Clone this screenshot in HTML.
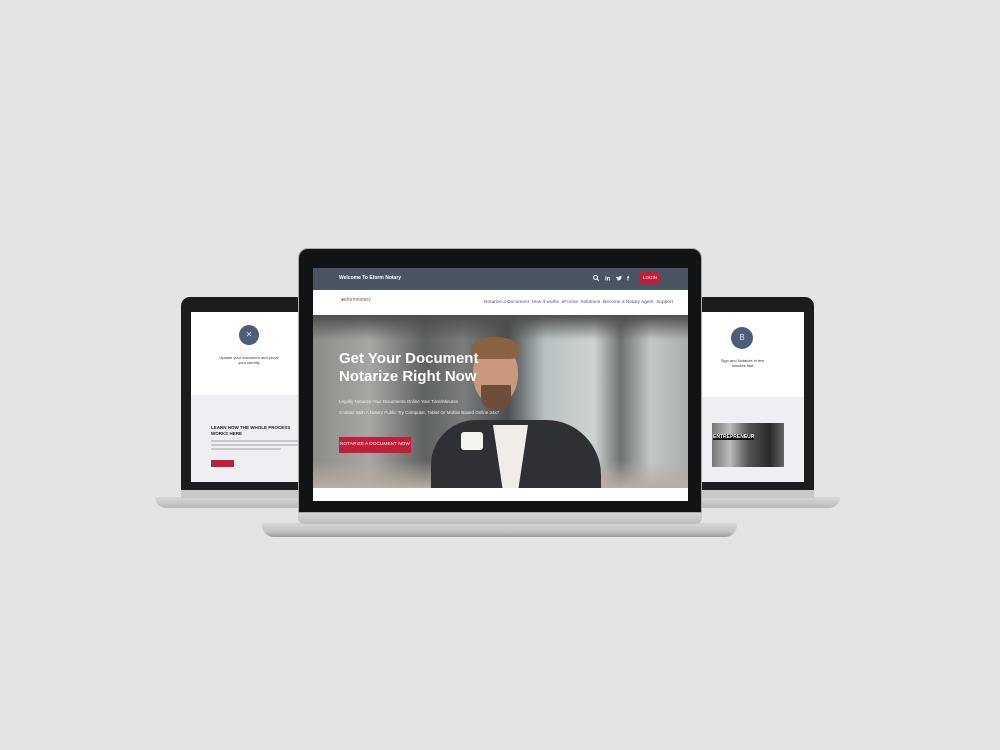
<!DOCTYPE html>
<html><head><style>
*{margin:0;padding:0;box-sizing:border-box}
body{width:1000px;height:750px;background:#e5e4e5;position:relative;overflow:hidden;font-family:"Liberation Sans",sans-serif}
.a{position:absolute}
</style></head><body>
<!-- left laptop -->
<div class="a" style="left:155px;top:497px;width:150px;height:11px;background:linear-gradient(#d8d8d8,#b9b9b9);border-radius:0 0 6px 20px"></div>
<div class="a" style="left:181px;top:297px;width:125px;height:200px;background:#1b1c1d;border-radius:9px 0 0 0"></div>
<div class="a" style="left:181px;top:490px;width:125px;height:8px;background:#c9c9c9"></div>
<div class="a" style="left:191px;top:312px;width:110px;height:83px;background:#fff"></div>
<div class="a" style="left:191px;top:395px;width:110px;height:87px;background:#eeeff3"></div>
<div class="a" style="left:239px;top:325px;width:20px;height:20px;border-radius:50%;background:#4d5e7a;color:#dfe4ec;font-size:8px;text-align:center;line-height:20px">✕</div>
<div class="a" style="left:218px;top:355px;width:62px;font-size:4px;text-align:center;color:#333;line-height:5px">Update your document and prove your identity</div>
<div class="a" style="left:211px;top:425px;width:90px;font-size:4.5px;font-weight:bold;color:#222;line-height:6px">LEARN HOW THE WHOLE PROCESS WORKS HERE</div>
<div class="a" style="left:211px;top:440px;width:90px;height:2px;background:#c6c7cc"></div>
<div class="a" style="left:211px;top:444px;width:90px;height:2px;background:#c6c7cc"></div>
<div class="a" style="left:211px;top:448px;width:70px;height:2px;background:#c6c7cc"></div>
<div class="a" style="left:211px;top:460px;width:23px;height:7px;background:#c21d3a"></div>
<!-- right laptop -->
<div class="a" style="left:695px;top:497px;width:145px;height:11px;background:linear-gradient(#d8d8d8,#b9b9b9);border-radius:0 0 20px 6px"></div>
<div class="a" style="left:695px;top:297px;width:119px;height:200px;background:#1b1c1d;border-radius:0 9px 0 0"></div>
<div class="a" style="left:695px;top:490px;width:119px;height:8px;background:#c9c9c9"></div>
<div class="a" style="left:700px;top:312px;width:104px;height:85px;background:#fff"></div>
<div class="a" style="left:700px;top:397px;width:104px;height:85px;background:#eeeff3"></div>
<div class="a" style="left:731px;top:327px;width:22px;height:22px;border-radius:50%;background:#4d5e7a;color:#dfe4ec;font-size:8px;text-align:center;line-height:22px">B</div>
<div class="a" style="left:715px;top:358px;width:55px;font-size:4px;text-align:center;color:#333;line-height:5px">Sign and Notarize in few minutes fast</div>
<div class="a" style="left:712px;top:423px;width:72px;height:44px;background:linear-gradient(90deg,#777 0%,#bbb 25%,#555 50%,#2a2a2a 80%,#666 100%)"></div>
<div class="a" style="left:713px;top:434px;font-size:5px;font-weight:bold;color:#fff;background:#111">ENTREPRENEUR</div>
<!-- center laptop base -->
<div class="a" style="left:262px;top:523px;width:475px;height:14px;background:linear-gradient(#d6d6d6,#c4c4c4 60%,#9a9a9a);border-radius:2px 2px 12px 12px"></div>
<div class="a" style="left:298px;top:511px;width:404px;height:13px;background:linear-gradient(#d9d9d9,#bdbdbd);border-radius:0 0 6px 6px"></div>
<div class="a" style="left:298px;top:248px;width:404px;height:265px;background:#121314;border-radius:10px 10px 0 0;border:1px solid #aaa"></div>
<!-- screen -->
<div class="a" style="left:313px;top:268px;width:375px;height:22px;background:#4b5462"></div>
<div class="a" style="left:339px;top:275px;font-size:5px;font-weight:bold;color:#fff">Welcome To Eform Notary</div>
<svg class="a" style="left:592px;top:274px" width="42" height="8" viewBox="0 0 42 8">
<circle cx="3.5" cy="3.5" r="2" fill="none" stroke="#fff" stroke-width="1"/><line x1="5" y1="5" x2="7" y2="7" stroke="#fff" stroke-width="1"/>
<text x="13" y="6.5" font-size="6" font-weight="bold" fill="#fff" font-family="Liberation Sans">in</text>
<path d="M24 2.5c1 .7 2 .8 3 .6 0-1 1-1.6 2-1.1l1-.4-.5 1c0 2.5-2 4.5-5 3.8 1 0 1.5-.3 2-.7-1 0-1.5-.5-1.7-1 .3 0 .5 0 .7-.1-1-.3-1.5-1-1.5-2z" fill="#fff"/>
<text x="35" y="6.5" font-size="6" font-weight="bold" fill="#fff" font-family="Liberation Sans">f</text>
</svg>
<div class="a" style="left:640px;top:272px;width:20px;height:12px;background:#c21d3a;color:#fff;font-size:4.5px;text-align:center;line-height:12px">LOGIN</div>
<div class="a" style="left:313px;top:290px;width:375px;height:25px;background:#fff"></div>
<div class="a" style="left:341px;top:297px;font-size:5px;color:#c21d3a">●<span style="color:#8a5a5a">eformnotary</span></div>
<div class="a" style="left:484px;top:300px;font-size:4.8px;color:#555;white-space:nowrap">Notarize a Document &nbsp;How it works &nbsp;eForms &nbsp;Solutions &nbsp;Become a Notary Agent &nbsp;Support</div>
<div class="a" style="left:313px;top:315px;width:375px;height:173px;overflow:hidden;background:linear-gradient(90deg,#8c8c88 0%,#a7a6a2 15%,#5e6260 30%,#7a7d7c 40%,#4b4f51 52%,#b8c2c3 62%,#cdd4d2 75%,#6d7270 82%,#c2c9c8 90%,#a9aeac 100%)">
 <div class="a" style="left:0;top:0;width:375px;height:25px;background:linear-gradient(#4c4d4c,rgba(80,80,80,0))"></div>
 <div class="a" style="left:0;top:145px;width:375px;height:28px;background:linear-gradient(rgba(190,180,160,0),#b8ada0)"></div>
 <div class="a" style="left:118px;top:105px;width:170px;height:80px;background:#2f3033;border-radius:45px 55px 0 0"></div>
 <div class="a" style="left:180px;top:110px;width:35px;height:70px;background:#f0ede8;clip-path:polygon(0 0,100% 0,70% 100%,30% 100%)"></div>
 <div class="a" style="left:160px;top:30px;width:45px;height:60px;background:#c9987a;border-radius:45% 45% 50% 50%"></div>
 <div class="a" style="left:158px;top:22px;width:48px;height:22px;background:#8a6442;border-radius:50% 50% 20% 20%"></div>
 <div class="a" style="left:168px;top:70px;width:30px;height:25px;background:#6e4e38;border-radius:0 0 50% 50%"></div>
 <div class="a" style="left:148px;top:117px;width:22px;height:18px;background:#f6f4f1;border-radius:3px"></div>
</div>
<div class="a" style="left:339px;top:350px;font-size:15px;font-weight:bold;color:#fff;line-height:18px">Get Your Document<br>Notarize Right Now</div>
<div class="a" style="left:339px;top:399px;font-size:4.5px;color:#eee">Legally Notarize Your Documents Online Your Time/Minutes</div>
<div class="a" style="left:339px;top:410px;width:170px;font-size:4.5px;color:#eee;line-height:6px">Contact With A Notary Public Try Computer, Tablet Or Mobile Based Online 24x7</div>
<div class="a" style="left:339px;top:437px;width:72px;height:16px;background:#c21d3a;color:#fff;font-size:4.8px;text-align:center;line-height:16px">NOTARIZE A DOCUMENT NOW</div>
<div class="a" style="left:313px;top:488px;width:375px;height:13px;background:#fff"></div>
</body></html>
